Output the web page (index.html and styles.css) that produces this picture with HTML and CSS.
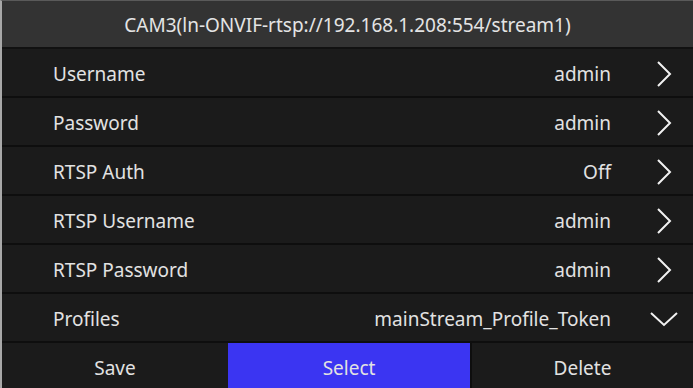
FILE: index.html
```html
<!DOCTYPE html>
<html lang="en">
<head>
  <meta charset="UTF-8">
  <meta name="viewport" content="width=device-width, initial-scale=1.0">
  <title>Camera Settings</title>
  <link rel="stylesheet" href="styles.css">
</head>
<body>
  <div class="screen">
    <div class="title-bar">CAM3(ln-ONVIF-rtsp://192.168.1.208:554/stream1)</div>

    <div class="settings">
      <div class="row">
        <span class="label">Username</span>
        <span class="value">admin</span>
        <span class="arrow">
          <svg width="16" height="26" viewBox="0 0 16 26"><path d="M2 1 L14 13 L2 25" /></svg>
        </span>
      </div>
      <div class="row">
        <span class="label">Password</span>
        <span class="value">admin</span>
        <span class="arrow">
          <svg width="16" height="26" viewBox="0 0 16 26"><path d="M2 1 L14 13 L2 25" /></svg>
        </span>
      </div>
      <div class="row">
        <span class="label">RTSP Auth</span>
        <span class="value">Off</span>
        <span class="arrow">
          <svg width="16" height="26" viewBox="0 0 16 26"><path d="M2 1 L14 13 L2 25" /></svg>
        </span>
      </div>
      <div class="row">
        <span class="label">RTSP Username</span>
        <span class="value">admin</span>
        <span class="arrow">
          <svg width="16" height="26" viewBox="0 0 16 26"><path d="M2 1 L14 13 L2 25" /></svg>
        </span>
      </div>
      <div class="row">
        <span class="label">RTSP Password</span>
        <span class="value">admin</span>
        <span class="arrow">
          <svg width="16" height="26" viewBox="0 0 16 26"><path d="M2 1 L14 13 L2 25" /></svg>
        </span>
      </div>
      <div class="row">
        <span class="label">Profiles</span>
        <span class="value">mainStream_Profile_Token</span>
        <span class="arrow">
          <svg width="28" height="16" viewBox="0 0 28 16"><path d="M1 2 L14 14 L27 2" /></svg>
        </span>
      </div>
    </div>

    <div class="actions">
      <button type="button" class="btn save">Save</button>
      <button type="button" class="btn select">Select</button>
      <button type="button" class="btn delete">Delete</button>
    </div>
  </div>
</body>
</html>
```

FILE: styles.css
```css
body {
  margin: 0;
  background: #1b1b1b;
  font-family: 'Noto Sans', sans-serif;
}

.screen {
  display: flex;
  flex-direction: column;
  height: 388px;
  box-sizing: border-box;
  border-left: 2px solid #a8a8a8;
  border-top: 1px solid #5a5a5a;
}

.title-bar {
  display: flex;
  align-items: center;
  justify-content: center;
  box-sizing: border-box;
  height: 48px;
  padding-top: 2px;
  background: #333333;
  border-bottom: 2px solid #111111;
  color: #e4e4e4;
  font-size: 19px;
}

.row {
  display: flex;
  align-items: center;
  box-sizing: border-box;
  height: 49px;
  padding: 3px 9px 0 51px;
  background: #1b1b1b;
  border-bottom: 2px solid #0e0e0e;
  color: #e2e2e2;
  font-size: 19px;
}

.label {
  flex: 1;
}

.value {
  text-align: right;
}

.arrow {
  display: flex;
  align-items: center;
  justify-content: center;
  width: 40px;
  margin-left: 33px;
}

.arrow svg path {
  fill: none;
  stroke: #f2f2f2;
  stroke-width: 2;
}

.actions {
  display: grid;
  grid-template-columns: 226px 242px 1fr;
  flex: 1;
}

.btn {
  border: none;
  background: #1b1b1b;
  color: #e2e2e2;
  font-family: 'Noto Sans', sans-serif;
  font-size: 19px;
  padding: 4px 0 0;
}

.select {
  background: #3b35f2;
}

.delete {
  border-left: 2px solid #0e0e0e;
}
```
